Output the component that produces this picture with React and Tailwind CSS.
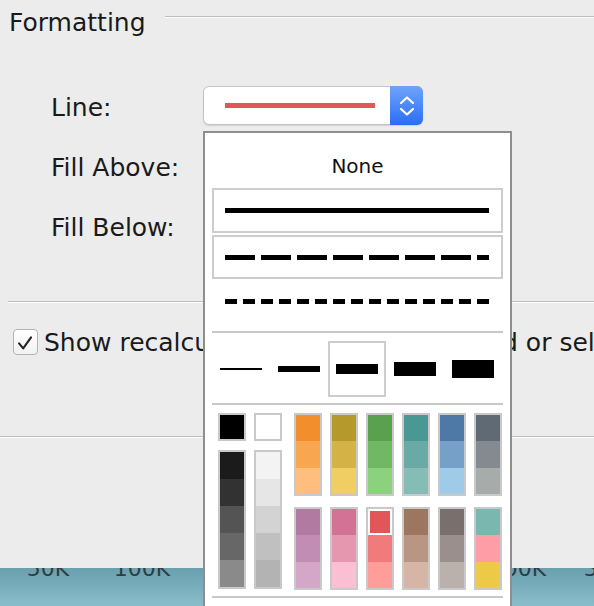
import { useState } from "react";

// swatch columns for the colour picker
const grays = ["#1b1b1b", "#323232", "#545454", "#676767", "#8a8a8a"];
const lights = ["#f3f3f3", "#e6e6e6", "#d3d3d3", "#c0c0c0", "#b3b3b3"];

const topRow = [
    ["#f28e2b", "#f8a650", "#ffbe7d"],
    ["#b6992d", "#d4b245", "#f1ce63"],
    ["#59a14f", "#71b865", "#8cd17d"],
    ["#499894", "#69aaa4", "#86bcb6"],
    ["#4e79a7", "#76a0c8", "#a0cbe8"],
    ["#5f6a74", "#848a90", "#a7abaa"],
];

const bottomRow = [
    ["#b07aa1", "#c28db4", "#d4a6c8"],
    ["#d37295", "#e697b0", "#fabfd2"],
    ["#e15759", "#f07b7a", "#ff9d9a"],
    ["#9d7660", "#b99583", "#d7b5a6"],
    ["#79706e", "#9a8f8c", "#bab0ac"],
    ["#79b7af", "#ff9da7", "#edc948"],
];

const weights = [2, 6, 10, 14, 18];
const axis = ["50K", "100K", "150K", "200K", "250K", "300K", "350K"];

function Dashes({ dash, count, last }) {
    return (
        <div className="flex gap-[6px]">
            {Array.from({ length: count }).map((_, i) => (
                <div
                    key={i}
                    className="h-[5px] bg-black"
                    style={{ width: i === count - 1 ? last : dash }}
                />
            ))}
        </div>
    );
}

function Column({ colors, selected }) {
    const heights = [26, 27, 26];
    return (
        <div className="w-[28px] border-2 border-[#c9c9c9] flex flex-col">
            {colors.map((c, i) =>
                selected === i ? (
                    <div key={c} className="border-2 border-white" style={{ height: heights[i] }}>
                        <div className="h-full w-full" style={{ background: c }} />
                    </div>
                ) : (
                    <div key={c} style={{ background: c, height: heights[i] }} />
                )
            )}
        </div>
    );
}

function LinePicker() {
    return (
        <div className="absolute left-[203px] top-[131px] w-[309px] h-[490px] bg-white border-2 border-[#8e8e8e] flex flex-col px-[7px]">
            <div className="pt-[23px] text-[20px] leading-[20px] text-center text-[#111]">None</div>

            <div className="mt-[12px] h-[45px] border-2 border-[#cdcdcd] flex items-center pl-[11px]">
                <div className="w-[264px] h-[5px] bg-black" />
            </div>
            <div className="mt-[2px] h-[44px] border-2 border-[#cdcdcd] flex items-center pl-[11px]">
                <Dashes dash={30} count={8} last={12} />
            </div>
            <div className="h-[52px] pt-[20px] pl-[13px]">
                <Dashes dash={12} count={15} last={12} />
            </div>

            <div className="h-[2px] bg-[#c8c8c8]" />

            <div className="mt-[8px] flex h-[56px]">
                {weights.map((w, i) => (
                    <div
                        key={w}
                        className={
                            i === 2
                                ? "w-[58px] h-full flex items-center justify-center border-2 border-[#cdcdcd]"
                                : "w-[58px] h-full flex items-center justify-center"
                        }
                    >
                        <div className="w-[42px] bg-black" style={{ height: w }} />
                    </div>
                ))}
            </div>

            <div className="mt-[6px] h-[2px] bg-[#c8c8c8]" />

            <div className="mt-[8px] flex pl-[6px]">
                <div className="flex gap-[8px]">
                    <div className="flex flex-col gap-[9px]">
                        <div className="w-[28px] h-[28px] border-2 border-[#c9c9c9] bg-black" />
                        <div className="w-[28px] border-2 border-[#c9c9c9]">
                            {grays.map((c) => (
                                <div key={c} className="h-[27px]" style={{ background: c }} />
                            ))}
                        </div>
                    </div>
                    <div className="flex flex-col gap-[9px]">
                        <div className="w-[28px] h-[28px] border-2 border-[#c9c9c9] bg-white" />
                        <div className="w-[28px] border-2 border-[#c9c9c9]">
                            {lights.map((c) => (
                                <div key={c} className="h-[27px]" style={{ background: c }} />
                            ))}
                        </div>
                    </div>
                </div>
                <div className="ml-[12px] flex flex-col gap-[11px]">
                    <div className="flex gap-[8px]">
                        {topRow.map((col) => (
                            <Column key={col[0]} colors={col} />
                        ))}
                    </div>
                    <div className="flex gap-[8px]">
                        {bottomRow.map((col) => (
                            <Column key={col[0]} colors={col} selected={col[0] === "#e15759" ? 0 : -1} />
                        ))}
                    </div>
                </div>
            </div>

            <div className="mt-[6px] h-[2px] bg-[#c8c8c8]" />
        </div>
    );
}

function LineSelect() {
    return (
        <div className="w-[220px] h-[39px] flex rounded-[6px] bg-white border border-[#c4c4c4] shadow-[0_1px_1px_rgba(0,0,0,0.12)]">
            <div className="flex-1 flex items-center pl-[21px]">
                <div className="w-[150px] h-[5px] bg-[#e15759]" />
            </div>
            <div className="w-[33px] -my-px -mr-px rounded-r-[6px] bg-gradient-to-b from-[#6fa4fa] to-[#2a6cf5] flex items-center justify-center">
                <svg width="18" height="24" viewBox="0 0 18 24" fill="none" stroke="white" strokeWidth="2.2" strokeLinecap="round" strokeLinejoin="round">
                    <path d="M3 9 L9 3.5 L15 9" />
                    <path d="M3 15 L9 20.5 L15 15" />
                </svg>
            </div>
        </div>
    );
}

function Rule({ className }) {
    return <div className={"h-[2px] border-t border-[#bcbcbc] border-b border-b-white " + className} />;
}

export default function App() {
    const [recalc, setRecalc] = useState(true);

    return (
        <div className="relative w-[594px] h-[606px] overflow-hidden bg-[#ececec] font-['DejaVu_Sans',sans-serif] text-[#1a1a1a]">
            {/* header */}
            <div className="flex h-[34px]">
                <div className="pl-[9px] pt-[11px] text-[25px] leading-[24px]">Formatting</div>
                <Rule className="flex-1 ml-[19px] mt-[16px]" />
            </div>

            {/* label rows */}
            <div className="pl-[51px] text-[25px] leading-[24px]">
                <div className="mt-[52px] flex">
                    <div className="w-[152px] pt-[10px]">Line:</div>
                    <LineSelect />
                </div>
                <div className="mt-[31px]">Fill Above:</div>
                <div className="mt-[36px]">Fill Below:</div>
            </div>

            <Rule className="mt-[61px] ml-[8px]" />

            <div className="mt-[26px] flex items-start">
                <button
                    onClick={() => setRecalc(!recalc)}
                    className="ml-[13px] w-[25px] h-[26px] rounded-[4px] border border-[#b4b4b4] bg-gradient-to-b from-white to-[#f3f3f3] flex items-center justify-center"
                >
                    {recalc && (
                        <svg width="25" height="26" viewBox="0 0 25 26" fill="none" stroke="#262626" strokeWidth="2.3" strokeLinecap="round" strokeLinejoin="round">
                            <path d="M5.5 14.5 L10 20 L18.5 8" />
                        </svg>
                    )}
                </button>
                <div className="ml-[6px] pt-[2px] text-[25px] leading-[24px] whitespace-nowrap">
                    Show recalculated line for highlighted or selected data points
                </div>
            </div>

            <Rule className="mt-[81px]" />

            <div className="h-[130px]" />

            {/* chart axis peeking out below the dialog */}
            <div className="h-[38px] overflow-hidden bg-gradient-to-b from-[#6a9fae] to-[#89bdca]">
                <div className="-mt-[10px] pl-[1px] flex text-[22px] leading-[22px] text-[#2f3d42]">
                    {axis.map((t) => (
                        <div key={t} className="w-[94px] shrink-0 text-center">{t}</div>
                    ))}
                </div>
            </div>

            <LinePicker />
        </div>
    );
}
